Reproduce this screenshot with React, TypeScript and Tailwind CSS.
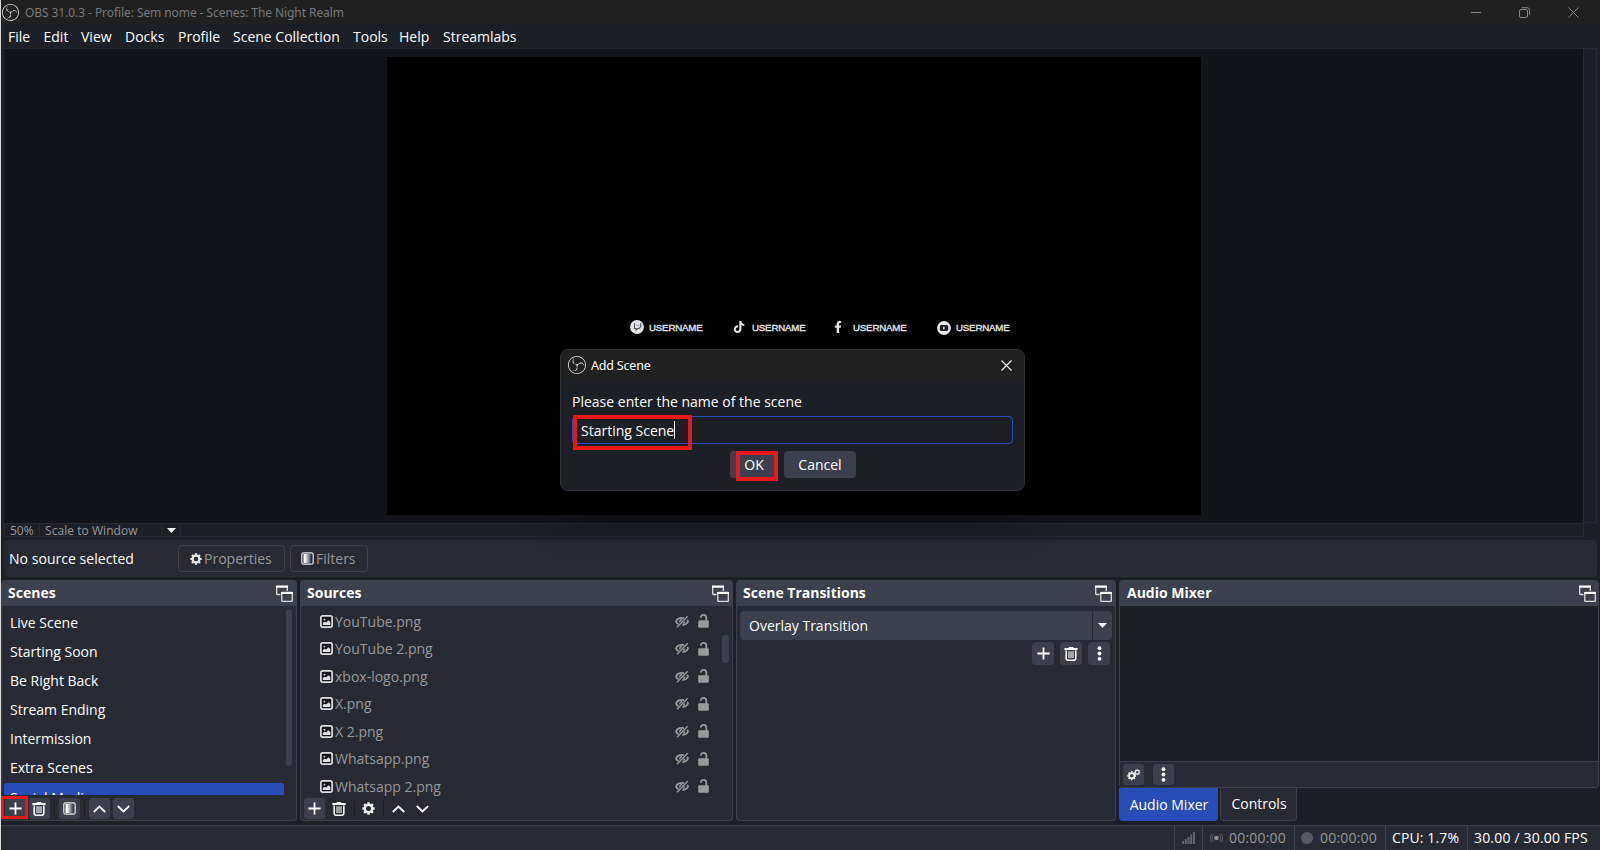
import type { ReactNode } from "react";
import { SiObsstudio } from "react-icons/si";
import { FaFacebookF, FaTiktok } from "react-icons/fa";

const menuItems = [
  { label: "File", className: "w-[35.5px]" },
  { label: "Edit", className: "w-[37.5px]" },
  { label: "View", className: "w-[44px]" },
  { label: "Docks", className: "w-[53px]" },
  { label: "Profile", className: "w-[55px]" },
  { label: "Scene Collection", className: "w-[120px]" },
  { label: "Tools", className: "w-[46px]" },
  { label: "Help", className: "w-[44px]" },
  { label: "Streamlabs", className: "" },
];

const scenes = [
  "Live Scene",
  "Starting Soon",
  "Be Right Back",
  "Stream Ending",
  "Intermission",
  "Extra Scenes",
  "Social Media",
];

const sources = [
  "YouTube.png",
  "YouTube 2.png",
  "xbox-logo.png",
  "X.png",
  "X 2.png",
  "Whatsapp.png",
  "Whatsapp 2.png",
];

// ---------- Icons ----------

const PopoutIcon = () => (
  <svg className="h-[17px] w-[17px]" viewBox="0 0 17 17" fill="none" stroke="#dcdcdc">
    <path d="M4.5 9.5H1.5a.8.8 0 0 1-.8-.8V2M11.3 2v4" strokeWidth="1.3" />
    <path d="M0 1.6h12" stroke="#fff" strokeWidth="2.2" />
    <rect x="5.8" y="7.5" width="10.5" height="8.8" rx="0.6" strokeWidth="1.3" />
    <path d="M5.2 8h11.7" stroke="#fff" strokeWidth="2.2" />
  </svg>
);

const PlusIcon = () => (
  <svg className="h-[13px] w-[13px]" viewBox="0 0 13 13" stroke="#fefefe" strokeWidth="1.8">
    <path d="M6.5 .4v12.2M.4 6.5h12.2" />
  </svg>
);

const TrashIcon = () => (
  <svg className="h-[14px] w-[14px]" viewBox="0 0 14 14" fill="none" stroke="#fefefe">
    <path d="M.4 2h13.2" strokeWidth="1.8" />
    <path d="M4.8 .8h4.4" strokeWidth="1.4" />
    <path d="M2.2 3.5v8.1q0 1.6 1.6 1.6h6.4q1.6 0 1.6-1.6V3.5" strokeWidth="1.6" />
    <path d="M5 4.2V11M7 4.2V11M9 4.2V11" strokeWidth="1.1" />
  </svg>
);

const FilterIcon = () => (
  <svg className="h-[13px] w-[13px]" viewBox="0 0 13 13">
    <defs>
      <linearGradient id="fade">
        <stop offset="0.2" stopColor="#fefefe" />
        <stop offset="1" stopColor="#3c404d" />
      </linearGradient>
    </defs>
    <rect x="0.8" y="0.8" width="11.4" height="11.4" rx="1.8" fill="none" stroke="#e8e8e8" strokeWidth="1.2" />
    <rect x="2.5" y="2" width="7.5" height="9" fill="url(#fade)" />
  </svg>
);

const GearIcon = ({ className = "h-[13px] w-[13px]" }: { className?: string }) => (
  <svg className={className} viewBox="0 0 14 14" fill="none" stroke="#ececec">
    <circle cx="7" cy="7" r="4" strokeWidth="2.6" />
    <path
      d="M7 .4v2.1M7 11.5v2.1M.4 7h2.1M11.5 7h2.1M2.3 2.3l1.6 1.6M10.1 10.1l1.6 1.6M2.3 11.7l1.6-1.6M10.1 3.9l1.6-1.6"
      strokeWidth="2.6"
    />
  </svg>
);

const ChevronIcon = ({ down }: { down?: boolean }) => (
  <svg className="h-[8px] w-[13px]" viewBox="0 0 13 8" fill="none" stroke="#f4f4f4" strokeWidth="1.9">
    {down ? <path d="M.8 1l5.7 5.5L12.2 1" /> : <path d="M.8 7l5.7-5.5L12.2 7" />}
  </svg>
);

const DotsIcon = () => (
  <svg className="h-[15px] w-[5px]" viewBox="0 0 5 15" fill="#fefefe">
    <circle cx="2.5" cy="2.2" r="1.9" />
    <circle cx="2.5" cy="7.5" r="1.9" />
    <circle cx="2.5" cy="12.8" r="1.9" />
  </svg>
);

const ImageIcon = () => (
  <svg className="h-[13px] w-[13px]" viewBox="0 0 13 13">
    <rect x="0.9" y="0.9" width="11.2" height="11.2" rx="1.8" fill="#15161b" stroke="#dedede" strokeWidth="1.7" />
    <path d="M2.8 10V8l1.9-1.2 1.5.8 2.2-2.3 1.9 1.8V10z" fill="#e0e0e0" />
    <circle cx="4.4" cy="4.6" r="0.9" fill="#e0e0e0" />
  </svg>
);

const HiddenIcon = () => (
  <svg className="h-[13px] w-[14px]" viewBox="0 0 14 13" fill="none" stroke="#9a9a9a">
    <path
      d="M3.6 9.3C2.3 8.700 1.400 7.700 1 6.500 2 4 4.300 2.900 7 2.900c.8 0 1.500.1 2.100.2M12.200 4.900c.3.500.6 1 .8 1.600-.9 2.200-2.900 3.500-5.700 3.600"
      strokeWidth="1.8"
    />
    <path d="M4.800 7.400C4.500 5.800 5.400 4.700 7.100 4.500M9.600 6.600c0 1-.5 1.600-1.400 1.900" strokeWidth="1.5" />
    <path d="M2 12.200L12.700 1.200" strokeWidth="1.4" />
  </svg>
);

const UnlockIcon = () => (
  <svg className="h-[14px] w-[11px]" viewBox="0 0 11 14">
    <path d="M2.8 3.7C2.8 1.8 4 .9 5.500.9s2.800 1 2.800 2.700V7" fill="none" stroke="#9a9a9a" strokeWidth="1.8" />
    <rect x="0.2" y="6.3" width="10.6" height="7.5" rx="1" fill="#9a9a9a" />
  </svg>
);

const TwitchBadge = () => (
  <svg className="h-[14px] w-[14px]" viewBox="0 0 14 14">
    <circle cx="7" cy="7" r="6.9" fill="#e4e6ea" />
    <path d="M4.5 3.3v5.200h1.600v1.600l1.700-1.600h1.300l1.600-1.700V3.300" fill="none" stroke="#4a4c52" strokeWidth="1.1" />
    <path d="M7 4.300v2.200M8.800 4.300v2.200" stroke="#85878d" strokeWidth="0.8" />
  </svg>
);

const YoutubeBadge = () => (
  <svg className="h-[14px] w-[14px]" viewBox="0 0 14 14">
    <circle cx="7" cy="7" r="6.9" fill="#e4e6ea" />
    <rect x="2.9" y="4" width="8.2" height="6" rx="1.8" fill="#17181b" />
    <path d="M6 5.500v3L8.600 7z" fill="#e4e6ea" />
  </svg>
);

const Caret = () => (
  <svg className="h-[5px] w-[9px]" viewBox="0 0 9 5" fill="#fefefe">
    <path d="M0 0h9L4.5 5z" />
  </svg>
);

// ---------- Building blocks ----------

const ToolButton = ({ flat, className = "w-[21px]", children }: { flat?: boolean; className?: string; children: ReactNode }) => (
  <div className={`flex h-[21px] shrink-0 items-center justify-center rounded-[3px] ${flat ? "" : "bg-[#3c404d]"} ${className}`}>
    {children}
  </div>
);

const Separator = () => <div className="h-[16px] w-px bg-[#1a1c22]" />;

const Dock = ({ title, className, children }: { title: string; className: string; children: ReactNode }) => (
  <section className={`flex h-[241px] shrink-0 flex-col overflow-hidden rounded-[4px] border border-t-0 border-[#3c404d] bg-[#272a33] ${className}`}>
    <header className="flex h-[26px] shrink-0 items-center justify-between bg-[#3c404d] pr-[3px] pl-[6px] font-bold">
      <span>{title}</span>
      <PopoutIcon />
    </header>
    {children}
  </section>
);

const Username = ({ icon, className }: { icon: ReactNode; className: string }) => (
  <div className={`flex items-center ${className}`}>
    <div className="flex w-[19px] shrink-0 items-center text-[#e4e6ea]">{icon}</div>
    <span className="pt-px font-['Liberation_Sans',sans-serif] text-[9.7px] tracking-[-0.18px] text-[#e4e6ea] [-webkit-text-stroke:0.35px_#e4e6ea]">
      USERNAME
    </span>
  </div>
);

const AddSceneDialog = () => (
  <div className="absolute top-[349px] left-[559px] h-[142px] w-[465px] overflow-hidden rounded-[8px] border border-[#2f3138] bg-[#1d1f26] shadow-[0_24px_40px_rgba(0,0,0,0.45)]">
    <div className="flex h-[31px] items-center bg-[#202020] pr-[12px] pl-[7px]">
      <SiObsstudio className="-mt-px size-[18px] text-[#e0e0e0]" />
      <span className="ml-[5px] pt-px font-['Noto_Sans',sans-serif] text-[12.5px] tracking-[-0.2px]">Add Scene</span>
      <svg className="-mt-px ml-auto h-[11px] w-[11px]" viewBox="0 0 11 11" stroke="#f0f0f0" strokeWidth="1.2">
        <path d="M.5.5l10 10M10.5.5l-10 10" />
      </svg>
    </div>
    <p className="mt-[11px] ml-[11px] h-[19px] leading-[19px]">Please enter the name of the scene</p>
    <div className="mx-[11px] mt-[5px] flex h-[28px] items-center rounded-[4px] border-[1.5px] border-[#284cb8] pl-[8px]">
      <span className="pt-px">Starting Scene</span>
      <span className="h-[18px] w-px bg-white" />
    </div>
    <div className="mt-[7px] ml-[169px] flex gap-[6px]">
      <div className="flex h-[27px] w-[48px] items-center justify-center rounded-[4px] bg-[#3c404d]">OK</div>
      <div className="flex h-[27px] w-[72px] items-center justify-center rounded-[4px] bg-[#3c404d]">Cancel</div>
    </div>
    {/* highlight marks */}
    <div className="absolute top-[65px] left-[12px] h-[35px] w-[119px] border-4 border-[#e81818]" />
    <div className="absolute top-[101px] left-[175px] h-[30px] w-[42px] border-4 border-[#e81818]" />
  </div>
);

export default function App() {
  return (
    <div className="relative flex h-[850px] w-[1600px] flex-col overflow-hidden border-l border-[#d8d8d8] bg-[#1d1f26] font-['Open_Sans',sans-serif] text-[14px] leading-none whitespace-nowrap text-[#fefefe]">
      {/* title bar */}
      <div className="flex h-[24px] shrink-0 items-center bg-[#202020] pl-px">
        <SiObsstudio className="size-[17px] text-[#e0e0e0]" />
        <span className="ml-[6px] pt-px font-['Noto_Sans',sans-serif] text-[12px] tracking-[-0.075px] text-[#77797f]">
          OBS 31.0.3 - Profile: Sem nome - Scenes: The Night Realm
        </span>
        <div className="ml-auto flex items-center gap-[38px] pr-[21px]">
          <div className="h-px w-[10px] bg-[#85878d]" />
          <svg className="h-[11px] w-[11px]" viewBox="0 0 11 11" fill="none" stroke="#85878d">
            <rect x="0.5" y="2.5" width="8" height="8" rx="1.5" />
            <path d="M2.5.7H8q2.500 0 2.500 2.500v5" />
          </svg>
          <svg className="h-[11px] w-[11px]" viewBox="0 0 11 11" stroke="#85878d">
            <path d="M.5.5l10 10M10.5.5l-10 10" />
          </svg>
        </div>
      </div>

      {/* menu */}
      <nav className="flex h-[24px] shrink-0 items-center pt-px pl-[7px]">
        {menuItems.map((item) => (
          <span key={item.label} className={`shrink-0 ${item.className}`}>
            {item.label}
          </span>
        ))}
      </nav>

      {/* preview */}
      <div className="ml-[3px] flex h-[475px] shrink-0">
        <div className="h-full w-[1579px] border-t border-[#24262d] bg-[#131419] pt-[8px] pl-[383px]">
          <div className="h-[458px] w-[814px] bg-black pt-[263px] pl-[243px]">
            <div className="flex h-[14px] items-center">
              <Username icon={<TwitchBadge />} className="w-[103px]" />
              <Username icon={<FaTiktok size={12} />} className="w-[101px]" />
              <Username icon={<FaFacebookF size={12} className="-ml-[2px]" />} className="w-[103px]" />
              <Username icon={<YoutubeBadge />} className="pt-px" />
            </div>
          </div>
        </div>
        <div className="w-[14px] border border-[#272a33]" />
      </div>
      <div className="ml-[3px] flex h-[14px] w-[1580px] shrink-0 items-center border border-[#272a33] text-[12px] text-[#97989c]">
        <span className="flex h-full w-[35px] items-center border-r border-[#272a33] pt-[2px] pl-[5px]">50%</span>
        <span className="flex h-full w-[122px] items-center border-r border-[#272a33] pt-[2px] pl-[5px] tracking-[0.05px]">Scale to Window</span>
        <span className="flex h-full w-[19px] items-center justify-center border-r border-[#272a33]">
          <Caret />
        </span>
      </div>

      {/* source toolbar */}
      <div className="mt-[3px] ml-[3px] flex h-[37px] w-[1593px] shrink-0 items-center rounded-[4px] bg-[#272a33] pl-[5px]">
        <span className="w-[169px] pt-px tracking-[0.04px]">No source selected</span>
        <div className="flex h-[27px] w-[107px] items-center rounded-[4px] border border-[#3c404d] pl-[11px] text-[#97989c]">
          <GearIcon className="mr-[2px] size-[12px]" />
          <span className="pt-px">Properties</span>
        </div>
        <div className="ml-[5px] flex h-[27px] w-[78px] items-center rounded-[4px] border border-[#3c404d] pl-[10px] text-[#97989c]">
          <FilterIcon />
          <span className="ml-[2px] pt-px">Filters</span>
        </div>
      </div>

      {/* docks */}
      <div className="mt-[3px] flex h-[241px] shrink-0">
        <Dock title="Scenes" className="w-[296px]">
          <div className="relative h-[189px] shrink-0 overflow-hidden pt-[2px] pl-[2px]">
            {scenes.map((scene, i) => (
              <div
                key={scene}
                className={`flex h-[29.15px] w-[280px] items-center pl-[6px] ${i === 6 ? "rounded-[3px] bg-[#284cb8] pt-[2px]" : ""}`}
              >
                {scene}
              </div>
            ))}
            <div className="absolute top-[3px] left-[284px] h-[157px] w-[6px] rounded-[3px] bg-[#3c404d]" />
          </div>
          <div className="flex items-center pt-[3px] pl-[2.5px]">
            <ToolButton>
              <PlusIcon />
            </ToolButton>
            <div className="w-[3px]" />
            <ToolButton>
              <TrashIcon />
            </ToolButton>
            <div className="flex w-[9px] justify-center">
              <Separator />
            </div>
            <ToolButton>
              <FilterIcon />
            </ToolButton>
            <div className="flex w-[9px] justify-center">
              <Separator />
            </div>
            <ToolButton>
              <ChevronIcon />
            </ToolButton>
            <div className="w-[3px]" />
            <ToolButton>
              <ChevronIcon down />
            </ToolButton>
          </div>
        </Dock>

        <Dock title="Sources" className="ml-[3px] w-[433px]">
          <div className="relative h-[191px] shrink-0 overflow-hidden pt-[1.5px]">
            {sources.map((source) => (
              <div key={source} className="flex h-[27.5px] items-center pl-[19px] text-[#97989c]">
                <ImageIcon />
                <span className="ml-[2px] w-[340px] pt-px">{source}</span>
                <HiddenIcon />
                <div className="ml-[9px]">
                  <UnlockIcon />
                </div>
              </div>
            ))}
            <div className="absolute top-[29px] right-[3px] h-[28px] w-[7px] rounded-[3px] bg-[#3c404d]" />
          </div>
          <div className="flex items-center pt-px pl-[3px]">
            <ToolButton>
              <PlusIcon />
            </ToolButton>
            <ToolButton flat className="ml-[2.5px] w-[22px]">
              <TrashIcon />
            </ToolButton>
            <div className="ml-[4px]">
              <Separator />
            </div>
            <ToolButton flat className="ml-[3.5px] w-[21px]">
              <GearIcon />
            </ToolButton>
            <div className="ml-[4px]">
              <Separator />
            </div>
            <ToolButton flat className="ml-[4px] w-[21px]">
              <ChevronIcon />
            </ToolButton>
            <ToolButton flat className="ml-[3px] w-[21px]">
              <ChevronIcon down />
            </ToolButton>
          </div>
        </Dock>

        <Dock title="Scene Transitions" className="ml-[3px] w-[380px]">
          <div className="mt-[5px] ml-[3px] flex h-[29px] w-[372px] items-center rounded-[4px] bg-[#3c404d] pl-[9px]">
            <span className="pt-px">Overlay Transition</span>
            <div className="ml-auto flex h-full w-[20px] items-center justify-center border-l border-[#272a33]">
              <Caret />
            </div>
          </div>
          <div className="mt-[2px] flex justify-end gap-[6px] pr-[5px]">
            {[<PlusIcon key="add" />, <TrashIcon key="remove" />, <DotsIcon key="more" />].map((icon, i) => (
              <div key={i} className="flex h-[23px] w-[22px] items-center justify-center rounded-[4px] bg-[#3c404d]">
                {icon}
              </div>
            ))}
          </div>
        </Dock>

        <div className="ml-[3px] flex w-[480px] shrink-0 flex-col">
          <div className="flex h-[208px] flex-col overflow-hidden rounded-[4px] border border-t-0 border-[#3c404d] bg-[#1d1f26]">
            <header className="flex h-[26px] shrink-0 items-center justify-between bg-[#3c404d] pr-[2px] pl-[7px] font-bold">
              <span>Audio Mixer</span>
              <PopoutIcon />
            </header>
            <div className="mt-auto flex h-[26px] shrink-0 items-center border-t border-[#3c404d] bg-[#272a33] pl-[3px]">
              <ToolButton>
                <div className="relative size-[14px]">
                  <GearIcon className="absolute bottom-[1px] left-0 size-[9.5px]" />
                  <GearIcon className="absolute top-[1px] right-0 size-[6.5px]" />
                </div>
              </ToolButton>
              <ToolButton className="ml-[9px] w-[21px]">
                <DotsIcon />
              </ToolButton>
            </div>
          </div>
          <div className="flex h-[33px] gap-[2px]">
            <div className="flex w-[99px] items-center justify-center rounded-b-[4px] bg-[#284cb8] pl-px">Audio Mixer</div>
            <div className="flex w-[77px] items-center justify-center rounded-b-[4px] border border-t-0 border-[#3c404d] bg-[#272a33] pl-px">
              Controls
            </div>
          </div>
        </div>
      </div>

      {/* status bar */}
      <div className="mt-[4px] flex h-[25px] shrink-0 items-stretch border-t border-[#3c404d] bg-[#272a33] text-[#97989c]">
        <div className="w-[1174px] border-r border-[#3c404d]" />
        <div className="flex w-[28px] items-center justify-center border-r border-[#3c404d]">
          <svg className="h-[12px] w-[13px]" viewBox="0 0 13 12" fill="#63656b">
            <path d="M0 9h2v3H0zM2.800 7h2v5h-2zM5.500 5h2v7h-2zM8.200 2.500h2V12h-2zM11 0h2v12h-2z" />
          </svg>
        </div>
        <div className="flex w-[92px] items-center border-r border-[#3c404d] pl-[7px] tracking-[0.2px]">
          <svg className="mr-[6px] h-[12px] w-[13px]" viewBox="0 0 13 12" fill="none" stroke="#50535b" strokeWidth="1.2">
            <circle cx="6.5" cy="6" r="2.3" fill="#909297" stroke="none" />
            <path d="M3.500 2.500q-2.500 3.500 0 7M9.500 2.500q2.500 3.500 0 7M1.500 1.500q-2 4.500 0 9M11.500 1.500q2 4.500 0 9" />
          </svg>
          <span>00:00:00</span>
        </div>
        <div className="flex w-[91px] items-center border-r border-[#3c404d] pl-[6px] tracking-[0.2px]">
          <div className="mr-[7px] size-[12px] rounded-full bg-[#585b60]" />
          <span>00:00:00</span>
        </div>
        <div className="flex w-[82px] items-center border-r border-[#3c404d] pl-[6px] tracking-[0.12px] text-[#fefefe]">CPU: 1.7%</div>
        <div className="flex items-center pl-[6px] tracking-[0.18px] text-[#fefefe]">30.00 / 30.00 FPS</div>
      </div>

      <AddSceneDialog />
      <div className="absolute top-[796px] left-0 h-[23px] w-[27px] border-3 border-[#e81818]" />
    </div>
  );
}
